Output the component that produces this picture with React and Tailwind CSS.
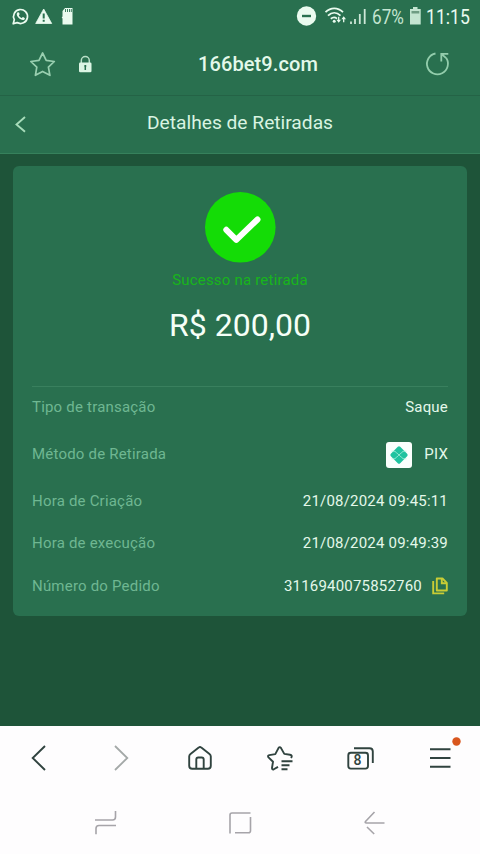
import React from 'react';

const rowLabel = 'text-[#6fb792]';

function Row({ label, height, children }) {
  return (
    <div className={`flex items-center justify-between ${height}`}>
      <span className={rowLabel}>{label}</span>
      <span className="flex items-center text-[#e4f8ea]">{children}</span>
    </div>
  );
}

function StatusBar() {
  return (
    <div className="flex h-8 items-center pl-[11px] pr-[10px] text-[#eafbef]">
      <svg className="h-8 w-[66px]" viewBox="11 0 66 32" fill="none">
        <path d="M13.200 23.800l1.100-4.100a7 7 0 1 1 2.800 2.900z" stroke="currentColor" strokeWidth="1.700" strokeLinejoin="round" />
        <path d="M17.400 12.600c.7-.7 1.400-.5 1.700.2l.5 1.300c.1.400-.5 1-.7 1.300.7 1.300 1.600 2.100 2.900 2.700.4-.4.9-1.200 1.300-1l1.500.8c.5.300.2 1.100-.2 1.500-1.200 1.100-3.300.5-5.100-.9-1.900-1.500-3.500-4.300-1.900-5.900z" fill="currentColor" />
        <path d="M43.700 9l8 14.500H35.700z" fill="currentColor" stroke="currentColor" strokeWidth="0.800" strokeLinejoin="round" />
        <path d="M43.700 13.500v5M43.700 19.800v2" stroke="#29704f" strokeWidth="2" />
        <path d="M65 8h7.500v16.500H62.500v-6l-.8-1 .8-1V11z" fill="currentColor" />
        <path d="M65.500 9v3M67.500 9v3M69.500 9v3M71.300 9v3" stroke="#29704f" strokeWidth="0.900" />
      </svg>
      <svg className="ml-auto h-8 w-[72px]" viewBox="296 0 72 32" fill="none" stroke="currentColor">
        <circle cx="306.500" cy="16" r="9.700" fill="currentColor" stroke="none" />
        <path d="M302 16h9" stroke="#29704f" strokeWidth="2.400" />
        <g strokeWidth="1.800">
          <path d="M325.500 12.200c5.200-5 12.300-5 17.500 0M328 15.600c3.800-3.600 8.700-3.600 12.500 0M330.800 18.800c2.300-2 4-2 6.200-.2" />
          <circle cx="334.200" cy="21.200" r="1.500" fill="currentColor" stroke="none" />
          <path d="M338.700 16.800v4.500M343.700 22.300v-4.500" strokeWidth="1.300" />
          <path d="M336.400 19.800l2.300 3 2.300-3zM341.400 19.300l2.300-3 2.300 3z" fill="currentColor" stroke="none" />
        </g>
        <path d="M351 21.500v2.500M355 19v5M359.800 14v10M364.700 9v15" strokeWidth="1.800" opacity="0.850" />
      </svg>
      <span className="ml-1 w-[33px] origin-left scale-x-[0.88] text-[19.500px] leading-8 text-[#c4e5d1] translate-y-[1.500px]">67%</span>
      <svg className="ml-1 h-8 w-3" viewBox="409 0 12 32">
        <path d="M413 7h4.500v2h3.200V24.500H410V9h3z" fill="#c4e5d1" />
        <path d="M411.500 11h7.800v2.500h-7.800z" fill="#6f9c83" />
      </svg>
      <span className="ml-[5px] w-11 origin-left scale-x-[0.880] text-[20px] leading-8 translate-y-px">11:15</span>
    </div>
  );
}

function AddressBar() {
  return (
    <div className="grid h-16 grid-cols-[1fr_auto_1fr] items-center border-b border-[#246346] pl-[28px] pr-[30px]">
      <svg className="h-16 w-[72px]" viewBox="28 32 72 64" fill="none">
        <path d="M42.600 53l3.600 7.300 8.100 1.200-5.900 5.700 1.500 8.100-7.300-3.900-7.200 3.900 1.400-8.100-6-5.700 8.200-1.200z" stroke="#99cfb0" strokeWidth="1.700" strokeLinejoin="round" />
        <path d="M81.300 64v-3.400a4 4 0 0 1 8 0V64" stroke="#b9dfc8" strokeWidth="1.500" />
        <rect x="79" y="62.500" width="12.500" height="9.800" rx="1.300" fill="#dcf5e4" />
        <path d="M85.300 65v5M84.300 66h2" stroke="#29704f" strokeWidth="1.500" />
      </svg>
      <span className="pl-[38px] text-[20px] font-medium tracking-[0.100px] text-[#e4f9ea]">166bet9.com</span>
      <svg className="ml-auto h-16 w-[25px]" viewBox="425 32 25 64" fill="none" stroke="#93cdac" strokeWidth="1.800">
        <path d="M435.500 53.500a10.500 10.500 0 1 0 10.700 4.500" />
        <path d="M441.300 61.500v-7.700h7M441.500 54l4.700 4.200" />
      </svg>
    </div>
  );
}

function PixLogo() {
  return (
    <svg className="mr-3 h-[26px] w-[26px] translate-y-px" viewBox="0 0 26 26">
      <rect width="26" height="26" rx="3" fill="#fbfffd" />
      <rect x="6.400" y="6.400" width="13.200" height="13.200" rx="1.700" transform="rotate(45 13 13)" fill="#20c3a0" />
      <path d="M5.500 9.200h2.300c1.500 0 2.200 1 3 1.800l1.300 1.300c.6.500 1.200.5 1.800 0l1.300-1.300c.8-.8 1.500-1.800 3-1.800h2.300M5.500 16.800h2.300c1.500 0 2.200-1 3-1.800l1.300-1.300c.6-.5 1.200-.5 1.800 0l1.300 1.300c.8.800 1.500 1.800 3 1.800h2.300" fill="none" stroke="#b5f3e0" strokeWidth="0.800" />
    </svg>
  );
}

function CopyIcon() {
  return (
    <svg className="ml-[10px] h-[18px] w-4" viewBox="0 0 16 18" fill="none" stroke="#c9cc35" strokeWidth="1.900">
      <path d="M4.800 1.500h5.700l4.300 4.300v7.700H4.800z" strokeLinejoin="round" />
      <path d="M9.800 1.500v4.800h5" />
      <path d="M1.200 4v12.400h11" />
    </svg>
  );
}

function DetailsCard() {
  return (
    <main className="h-[572px] bg-[#1e5439] px-[13px] pt-3">
      <section className="flex h-[450px] flex-col rounded-md bg-[#29704f] px-[19px] pt-[26px] text-[15px]">
        <div className="flex h-[195px] flex-col items-center border-b border-[#39805e]">
          <svg className="h-[71px] w-[71px]" viewBox="0 0 71 71" fill="none">
            <circle cx="35.300" cy="35.300" r="35.300" fill="#14dc06" />
            <path d="M21.300 37.800l10 10L52.500 27.500" stroke="#fff" strokeWidth="6" strokeLinecap="round" strokeLinejoin="round" />
          </svg>
          <span className="mt-[7px] leading-5 tracking-[0.200px] text-[#18b51b]">Sucesso na retirada</span>
          <span className="mt-[15px] text-[32px] leading-10 text-[#f5fff7]">R$ 200,00</span>
        </div>
        <div className="-mt-px tracking-[0.200px]">
          <Row label="Tipo de transação" height="h-[42px]">Saque</Row>
          <Row label="Método de Retirada" height="h-[52px]"><PixLogo />PIX</Row>
          <Row label="Hora de Criação" height="h-[42px]">21/08/2024 09:45:11</Row>
          <Row label="Hora de execução" height="h-[42px]">21/08/2024 09:49:39</Row>
          <Row label="Número do Pedido" height="h-[44px]">3116940075852760<CopyIcon /></Row>
        </div>
      </section>
    </main>
  );
}

function BrowserToolbar() {
  return (
    <nav className="grid h-16 grid-cols-6 text-[#30433f]">
      <svg className="h-16 w-20" viewBox="0 726 80 64" fill="none" stroke="currentColor" strokeWidth="1.900">
        <path d="M45 746l-12.300 12L45 770" />
      </svg>
      <svg className="h-16 w-20" viewBox="80 726 80 64" fill="none" stroke="#a4a9a8" strokeWidth="1.800">
        <path d="M115 746l12.300 12L115 770" />
      </svg>
      <svg className="h-16 w-20" viewBox="160 726 80 64" fill="none" stroke="currentColor" strokeWidth="1.900" strokeLinejoin="round">
        <path d="M198.700 747.600a2 2 0 0 1 2.600 0l8.200 6.300q1.300 1 1.300 2.600v9.300q0 3-3 3h-15.600q-3 0-3-3v-9.300q0-1.600 1.300-2.600z" />
        <path d="M196.300 768.500v-9q0-2 2-2h3.400q2 0 2 2v9" />
      </svg>
      <svg className="h-16 w-20" viewBox="240 726 80 64" fill="none" stroke="currentColor" strokeWidth="1.900" strokeLinejoin="round">
        <path d="M291 758l.3-.5q1.300-2.300-1.300-2.800l-5.700-.8-3.400-6q-1.200-1.600-2.300 0l-3.300 6.200-6 1q-2 .5-.8 2.300l4.500 4.400-1 6.200q0 2 1.800 1.300l4.200-2.400" />
        <path d="M281.500 761.300h11M281.500 765.200h8M281.500 769.200h6" />
      </svg>
      <div className="flex items-center justify-center">
        <div className="relative h-[23px] w-[27px]">
          <svg className="h-full w-full" viewBox="347 747 27 23" fill="none" stroke="currentColor" strokeWidth="1.900">
            <rect x="348.300" y="752.800" width="19.700" height="15.800" rx="2.500" />
            <path d="M354 748.200h15.500q3.300 0 3.300 3.300V763" />
          </svg>
          <span className="absolute left-[1px] top-[5.500px] w-5 text-center text-[14px] font-medium leading-[16px]">8</span>
        </div>
      </div>
      <svg className="h-16 w-20" viewBox="400 726 80 64" fill="none">
        <path d="M430 749.300h20.500M430 758h20.500M430 766.700h20.500" stroke="currentColor" strokeWidth="1.900" />
        <circle cx="456.500" cy="741.500" r="4.200" fill="#d9571e" />
      </svg>
    </nav>
  );
}

function SystemNavigation() {
  return (
    <div className="flex h-16 items-center justify-center gap-[110px] pt-0.5 text-[#a6a4a9]">
      <svg className="h-6 w-6" viewBox="94 811 24 24" fill="none" stroke="currentColor" strokeWidth="1.600">
        <path d="M95 820h17.500q3 0 3-3v-6M116 825.500H99q-3 0-3 3v5.700" />
      </svg>
      <svg className="h-6 w-6" viewBox="228 811 24 24" fill="none" stroke="currentColor" strokeWidth="1.600">
        <path d="M230 833.500V815q0-2 2-2h18.500M250.500 817v13.800q0 2-2 2H235" />
      </svg>
      <svg className="h-6 w-6" viewBox="362.500 811 24 24" fill="none" stroke="currentColor" strokeWidth="1.600">
        <path d="M385 823h-18q-2-.3-1-1.500l9-9.500M367.500 827l7.200 7" />
      </svg>
    </div>
  );
}

export default function App() {
  return (
    <div className="h-[854px] w-[480px] overflow-hidden bg-[#fefdfe] font-[Roboto,sans-serif]">
      <header className="bg-[#29704f]">
        <StatusBar />
        <AddressBar />
        <div className="grid h-[58px] grid-cols-[1fr_auto_1fr] items-center border-b border-[#36815c]">
          <svg className="mb-0.5 ml-[13px] h-5 w-4" viewBox="0 0 16 20" fill="none" stroke="#a7dcba" strokeWidth="1.900">
            <path d="M12 3L3.500 10.500 12 17.800" />
          </svg>
          <h1 className="mb-[3px] text-[19.200px] leading-7 text-[#d9f4e2]">Detalhes de Retiradas</h1>
        </div>
      </header>
      <DetailsCard />
      <BrowserToolbar />
      <SystemNavigation />
    </div>
  );
}
